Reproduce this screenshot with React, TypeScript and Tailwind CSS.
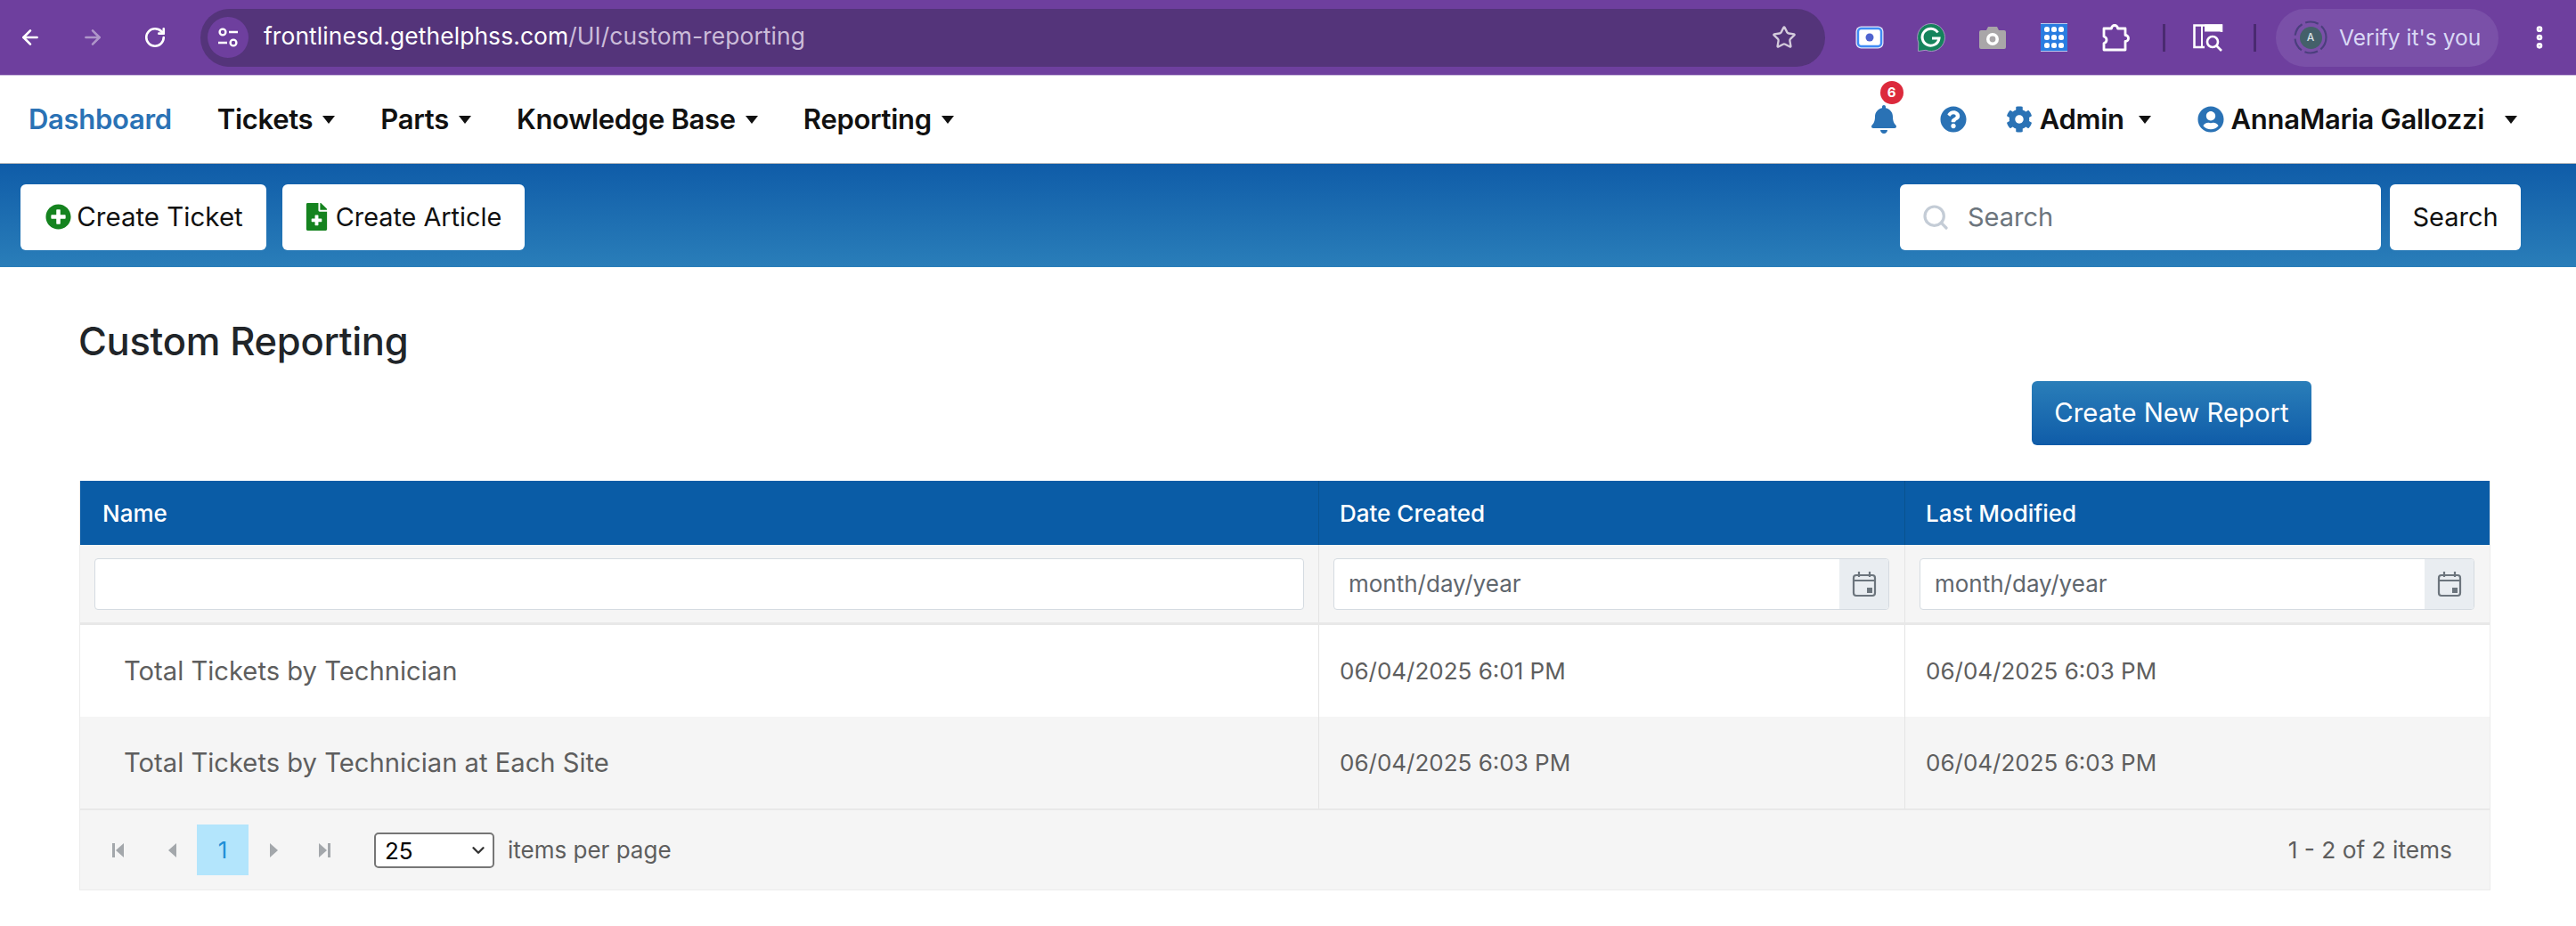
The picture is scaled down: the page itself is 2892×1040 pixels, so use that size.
import React from 'react';
import { ArrowLeft, ArrowRight, RotateCw, Star, Search, EllipsisVertical, ChevronDown } from 'lucide-react';
import { FaBell, FaQuestionCircle, FaCog, FaUserCircle, FaPlusCircle, FaFileMedical } from 'react-icons/fa';

const font = 'font-["Inter","Liberation_Sans",sans-serif]';

const Caret = () => (
  <span className="inline-block w-0 h-0 border-x-[7.5px] border-x-transparent border-t-[9px] border-t-[#111]" />
);

const NavItem = ({ label, caret = true }: { label: string; caret?: boolean }) => (
  <div className="flex items-center text-[31px] font-semibold text-[#111] tracking-[-0.3px]">
    {label}
    {caret && <span className="ml-[11px] flex"><Caret /></span>}
  </div>
);

const BrowserBar = () => (
  <div className="h-[85px] bg-[#6e3f9e] flex items-center text-white border-b border-[#c9b8dc]">
    <div className="w-[225px] flex items-center pl-[21px] gap-[44px]">
      <ArrowLeft size={26} strokeWidth={2.4} />
      <ArrowRight size={26} strokeWidth={2.4} className="opacity-45" />
      <RotateCw size={26} strokeWidth={2.4} />
    </div>
    <div className="w-[1824px] h-[65px] rounded-full bg-[#54347a] flex items-center pl-[8px] pr-[32px]">
      <div className="w-[46px] h-[46px] rounded-full bg-[#6e3f9e] flex items-center justify-center">
        <svg width="24" height="26" viewBox="0 0 24 26" fill="none" stroke="white" strokeWidth="2.4">
          <circle cx="6" cy="7" r="3.4" />
          <path d="M13 7h10M1 19h10" />
          <circle cx="18" cy="19" r="3.4" />
        </svg>
      </div>
      <div className="ml-[17px] -mt-[3px] text-[26.4px] tracking-[0.1px]">
        <span className="text-white">frontlinesd.gethelphss.com</span>
        <span className="text-[#cbbcd9]">/UI/custom-reporting</span>
      </div>
      <Star size={28} strokeWidth={2} className="ml-auto text-[#d4cbdc]" />
    </div>
    <div className="flex items-center ml-[34px] gap-[37px]">
      {/* extension icons */}
      <svg width="32" height="32" viewBox="0 0 32 32">
        <rect x="0.5" y="3.5" width="31" height="25" rx="6" fill="#e3e4f8" />
        <rect x="3" y="6" width="26" height="20" rx="3.5" fill="white" stroke="#3f8cf5" strokeWidth="2.4" />
        <circle cx="16" cy="16" r="4.5" fill="#4f63cf" />
      </svg>
      <svg width="32" height="32" viewBox="0 0 32 32">
        <path d="M16 .5a15.5 15.5 0 1 1-6 29.8L1.5 31.5 1.8 22A15.5 15.5 0 0 1 16 .5z" fill="#15835c" stroke="#a894c2" strokeWidth="1" />
        <path d="M23.5 10.5a9.5 9.5 0 1 0 1.5 6.5h-8" fill="none" stroke="white" strokeWidth="3" />
      </svg>
      <svg width="32" height="32" viewBox="0 0 32 32">
        <path d="M1 10a2 2 0 0 1 2-2h6l2-4h10l2 4h6a2 2 0 0 1 2 2v17a2 2 0 0 1-2 2H3a2 2 0 0 1-2-2z" fill="#a9a6a8" />
        <circle cx="16" cy="18" r="7" fill="white" />
        <circle cx="16" cy="18" r="3.4" fill="#a9a6a8" />
      </svg>
      <svg width="32" height="32" viewBox="0 0 32 32">
        <rect x="1" y="1" width="30" height="30" fill="#2a7de1" />
        <path d="M1 .5h30M1 31.5h30" stroke="#b9c9ef" strokeWidth="1" />
        <g fill="white">
          <rect x="5" y="4" width="6" height="6" rx="2.5" />
          <rect x="13" y="4" width="6" height="6" rx="2.5" />
          <rect x="21" y="4" width="6" height="6" rx="2.5" />
          <rect x="5" y="13" width="6" height="6" rx="2.5" />
          <rect x="13" y="13" width="6" height="6" rx="2.5" />
          <rect x="21" y="13" width="6" height="6" rx="2.5" />
          <rect x="5" y="22" width="6" height="6" rx="2.5" />
          <rect x="13" y="22" width="6" height="6" rx="2.5" />
          <rect x="21" y="22" width="6" height="6" rx="2.5" />
        </g>
      </svg>
      <svg width="32" height="34" viewBox="0 0 32 34" fill="none" stroke="white" strokeWidth="2.8" strokeLinejoin="round">
        <path d="M3 7h8.5a3.5 3.5 0 0 1 7 0H27v7.5a3.5 3.5 0 0 1 0 7V31H3v-7.5a4 4 0 0 0 3-3.5 4 4 0 0 0-3-4z" />
      </svg>
      <div className="w-[3px] h-[31px] bg-[#4a2a70]" />
    </div>
    <div className="flex items-center ml-[30px] gap-[33px]">
      <svg width="36" height="32" viewBox="0 0 36 32" fill="none" stroke="white" strokeWidth="2.6">
        <path d="M14 27H2.5V2.5H33V10" />
        <path d="M14 1.5h20v8H14z" fill="white" stroke="none" />
        <path d="M11 3v24" strokeWidth="2" />
        <circle cx="23" cy="21" r="6" />
        <path d="m27.5 25.5 5.5 5.5" />
      </svg>
      <div className="w-[3px] h-[31px] bg-[#4a2a70]" />
    </div>
    <div className="ml-[22px] w-[250px] h-[65px] rounded-full bg-[#7a50a8] flex items-center pl-[20px]">
      <div className="relative w-[38px] h-[38px] flex items-center justify-center">
        <svg width="38" height="38" viewBox="0 0 38 38" fill="none" className="absolute inset-0">
          <circle cx="19" cy="19" r="17.5" stroke="#4b3f7d" strokeWidth="2.2" strokeDasharray="15 4" />
        </svg>
        <div className="w-[25px] h-[25px] rounded-full bg-[#44606a] flex items-center justify-center text-[12px] font-medium text-[#d9e2e6]">
          A
        </div>
      </div>
      <span className="ml-[13px] text-[24.6px] text-[#d9d8f5] whitespace-nowrap">Verify it's you</span>
    </div>
    <EllipsisVertical size={32} strokeWidth={3} className="ml-[30px]" />
  </div>
);

const NavBar = () => (
  <nav className="h-[99px] bg-white flex items-center pl-[32px] pr-[66px] border-b border-[#bbb]">
    <div className="text-[31px] font-semibold text-[#2a72b5] tracking-[-0.3px]">Dashboard</div>
    <div className="flex items-center ml-[51px] gap-[51px]">
      <NavItem label="Tickets" />
      <NavItem label="Parts" />
      <NavItem label="Knowledge Base" />
      <NavItem label="Reporting" />
    </div>
    <div className="ml-auto flex items-center">
      <div className="relative">
        <FaBell size={32} className="text-[#2a72b5]" />
        <span className="absolute -top-[27px] left-[12px] w-[26px] h-[26px] rounded-full bg-[#dc2a3c] text-white text-[15px] font-bold flex items-center justify-center">
          6
        </span>
      </div>
      <FaQuestionCircle size={30} className="ml-[47px] text-[#2a72b5]" />
      <FaCog size={30} className="ml-[44px] text-[#2a72b5]" />
      <div className="ml-[8px]"><NavItem label="Admin" caret={false} /></div>
      <span className="ml-[16px] flex"><Caret /></span>
      <FaUserCircle size={30} className="ml-[52px] text-[#2a72b5]" />
      <div className="ml-[8px]"><NavItem label="AnnaMaria Gallozzi" caret={false} /></div>
      <span className="ml-[23px] flex"><Caret /></span>
    </div>
  </nav>
);

const ActionBar = () => (
  <div className="h-[116px] pt-[3px] bg-gradient-to-b from-[#0f5ca8] to-[#2a7eb9] flex items-center pl-[23px] pr-[62px]">
    <button className="w-[276px] h-[74px] pl-[2px] bg-white rounded-[6px] flex items-center justify-center gap-[6px] text-[29.5px] text-[#111]">
      <FaPlusCircle size={29} className="text-[#15831f]" />
      Create Ticket
    </button>
    <button className="ml-[18px] w-[272px] h-[74px] pr-[3px] bg-white rounded-[6px] flex items-center justify-center gap-[6px] text-[28.8px] text-[#111]">
      <FaFileMedical size={31} className="text-[#15831f]" />
      Create Article
    </button>
    <div className="ml-auto w-[540px] h-[74px] bg-white rounded-[6px] flex items-center pl-[24px] text-[29px] text-[#6c757d]">
      <Search size={32} strokeWidth={2.4} className="text-[#c4ccd6]" />
      <span className="ml-[20px]">Search</span>
    </div>
    <button className="ml-[10px] w-[147px] h-[74px] bg-white rounded-[6px] text-[29px] text-[#111]">Search</button>
  </div>
);

const CalendarIcon = () => (
  <svg width="28" height="30" viewBox="0 0 28 30" fill="none" stroke="#6c757d" strokeWidth="2.2">
    <rect x="2" y="5" width="24" height="23" rx="3" />
    <path d="M2 11h24M8 1v6M20 1v6" />
    <rect x="17" y="19" width="6" height="6" fill="#6c757d" stroke="none" />
  </svg>
);

const DateFilter = () => (
  <div className="h-[58px] flex bg-white border border-[#d5dbe1] rounded-[4px] overflow-hidden">
    <div className="flex-1 flex items-center pl-[16px] text-[26px] text-[#5f666d]">month/day/year</div>
    <div className="w-[55px] bg-[#e9edf1] flex items-center justify-center">
      <CalendarIcon />
    </div>
  </div>
);

const SeekIcon = ({ dir, bar = false }: { dir: 'left' | 'right'; bar?: boolean }) => (
  <svg width="16" height="20" viewBox="0 0 16 20" fill="#a3a7ab" className="w-[16px] h-[20px]">
    {dir === 'left' ? (
      <>
        {bar && <rect x="1" y="2" width="3" height="16" />}
        <path d="M14 2v16L5 10z" />
      </>
    ) : (
      <>
        <path d="M2 2v16l9-8z" />
        {bar && <rect x="12" y="2" width="3" height="16" />}
      </>
    )}
  </svg>
);

const rows = [
  { name: 'Total Tickets by Technician', created: '06/04/2025 6:01 PM', modified: '06/04/2025 6:03 PM', alt: false },
  { name: 'Total Tickets by Technician at Each Site', created: '06/04/2025 6:03 PM', modified: '06/04/2025 6:03 PM', alt: true },
];

const ReportTable = () => (
  <div className="w-[2707px] ml-[89px] border-x border-[#ececec] border-b">
    <div className="grid grid-cols-[1390px_658px_1fr] h-[72px] bg-[#0a5ca6] text-white text-[26px] font-medium items-center">
      <div className="pl-[25px]">Name</div>
      <div className="pl-[23px] h-full flex items-center border-l border-[#09528f]">Date Created</div>
      <div className="pl-[23px] h-full flex items-center border-l border-[#09528f]">Last Modified</div>
    </div>
    <div className="grid grid-cols-[1390px_658px_1fr] h-[90px] bg-[#f5f5f5] items-center border-b-[3px] border-[#e8e8e8]">
      <div className="pl-[16px] pr-[16px]">
        <div className="h-[58px] bg-white border border-[#d5dbe1] rounded-[4px]" />
      </div>
      <div className="h-full flex flex-col justify-center pl-[16px] pr-[17px] border-l border-[#e4e4e4]">
        <DateFilter />
      </div>
      <div className="h-full flex flex-col justify-center pl-[16px] pr-[17px] border-l border-[#e4e4e4]">
        <DateFilter />
      </div>
    </div>
    {rows.map((row) => (
      <div
        key={row.name}
        className={`grid grid-cols-[1390px_658px_1fr] h-[103px] items-center text-[#5e5e5e] ${row.alt ? 'bg-[#f5f5f5]' : 'bg-white'}`}
      >
        <div className="pl-[49px] text-[29.2px]">{row.name}</div>
        <div className="pl-[23px] h-full flex items-center border-l border-[#e4e4e4] text-[26px]">{row.created}</div>
        <div className="pl-[23px] h-full flex items-center border-l border-[#e4e4e4] text-[26px]">{row.modified}</div>
      </div>
    ))}
    <div className="h-[91px] bg-[#f5f5f5] border-t-[2px] border-[#e8e8e8] flex items-center pl-[35px] pr-[42px] text-[26px] text-[#5e5e5e]">
      <SeekIcon dir="left" bar />
      <div className="ml-[43px]"><SeekIcon dir="left" /></div>
      <div className="ml-[21px] w-[58px] h-[57px] bg-[#b3e5fc] text-[#1f8fd6] flex items-center justify-center">1</div>
      <div className="ml-[22px]"><SeekIcon dir="right" /></div>
      <div className="ml-[39px]"><SeekIcon dir="right" bar /></div>
      <div className="ml-[48px] mt-[1px] w-[135px] h-[40px] bg-white border-2 border-[#767676] rounded-[5px] flex items-center pl-[10px] text-[26px] text-black">
        25
        <ChevronDown size={22} strokeWidth={2.6} className="ml-auto mr-[5px] text-[#333]" />
      </div>
      <span className="ml-[15px]">items per page</span>
      <span className="ml-auto text-[26.3px]">1 - 2 of 2 items</span>
    </div>
  </div>
);

const App: React.FC = () => {
  return (
    <div className={`w-[2892px] h-[1040px] overflow-hidden bg-white ${font}`}>
      <BrowserBar />
      <NavBar />
      <ActionBar />
      <div className="flex items-start h-[240px]">
        <h1 className="ml-[88px] mt-[62px] text-[43.5px] font-medium text-[#212529] tracking-[-0.3px] leading-none">Custom Reporting</h1>
        <button className="ml-auto mr-[297px] mt-[128px] w-[314px] h-[72px] rounded-[6px] bg-gradient-to-b from-[#2a7eb9] to-[#0f5ca8] text-white text-[29.3px]">
          Create New Report
        </button>
      </div>
      <ReportTable />
    </div>
  );
};

export default App;
